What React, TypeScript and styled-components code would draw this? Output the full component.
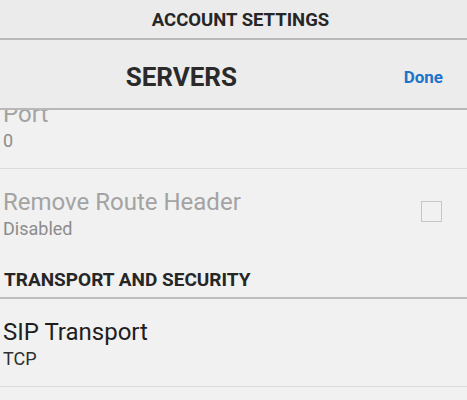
import React from "react";
import styled, { createGlobalStyle } from "styled-components";

const Global = createGlobalStyle`
  html, body { margin: 0; padding: 0; background: #f0f0f0; }
  body { font-family: Roboto, "Noto Sans", "Liberation Sans", sans-serif; }
  * { box-sizing: border-box; }
`;

const Screen = styled.div`
  width: 467px;
  height: 400px;
  display: flex;
  flex-direction: column;
  overflow: hidden;
  background: #f1f1f1;
`;

const TopBar = styled.div`
  height: 40px;
  flex-shrink: 0;
  display: flex;
  align-items: center;
  justify-content: center;
  padding: 1px 0 0 14px;
  background: #ebebeb;
  border-bottom: 2px solid #b8b8b8;
  font-size: 18.5px;
  font-weight: 700;
  color: #262626;
`;

const NavBar = styled.div`
  height: 70px;
  flex-shrink: 0;
  display: flex;
  align-items: center;
  padding-top: 6px;
  background: #ececec;
  border-bottom: 2px solid #b8b8b8;
`;

const NavTitle = styled.div`
  flex: 1;
  text-align: center;
  font-size: 26px;
  font-weight: 700;
  color: #2a2a2a;
`;

const DoneButton = styled.button`
  border: 0;
  background: none;
  padding: 0 24px 0 41px;
  font-family: inherit;
  font-size: 17px;
  font-weight: 700;
  color: #1c74c9;
  cursor: pointer;
`;

const Viewport = styled.div`
  flex: 1;
  overflow: hidden;
`;

const List = styled.div`
  display: flex;
  flex-direction: column;
  margin-top: -29px;
`;

const Row = styled.div<{ $divider?: boolean }>`
  height: 88px;
  display: flex;
  align-items: center;
  padding: 0 25px 0 3px;
  border-bottom: ${(p) => (p.$divider ? "1px solid #dcdcdc" : "none")};
`;

const RowText = styled.div`
  flex: 1;
  display: flex;
  flex-direction: column;
  padding-top: 2px;
`;

const Title = styled.div<{ $disabled?: boolean }>`
  font-size: 24px;
  line-height: 28px;
  color: ${(p) => (p.$disabled ? "#a3a3a3" : "#1e1e1e")};
`;

const Subtitle = styled.div<{ $disabled?: boolean }>`
  font-size: 18px;
  line-height: 22px;
  margin-top: 2px;
  color: ${(p) => (p.$disabled ? "#8c8c8c" : "#2e2e2e")};
`;

const Checkbox = styled.div`
  width: 21px;
  height: 21px;
  border: 1.5px solid #c6c6c6;
  margin-top: -3px;
`;

const SectionHeader = styled.div`
  height: 42px;
  display: flex;
  align-items: center;
  padding: 4px 4px 0;
  border-bottom: 2px solid #bdbdbd;
  font-size: 19px;
  font-weight: 700;
  color: #262626;
`;

export default function App() {
  return (
    <>
      <Global />
      <Screen>
        <TopBar>ACCOUNT SETTINGS</TopBar>
        <NavBar>
          <NavTitle>SERVERS</NavTitle>
          <DoneButton>Done</DoneButton>
        </NavBar>
        <Viewport>
          <List>
            <Row $divider>
              <RowText>
                <Title $disabled>Port</Title>
                <Subtitle $disabled>0</Subtitle>
              </RowText>
            </Row>
            <Row>
              <RowText>
                <Title $disabled>Remove Route Header</Title>
                <Subtitle $disabled>Disabled</Subtitle>
              </RowText>
              <Checkbox />
            </Row>
            <SectionHeader>TRANSPORT AND SECURITY</SectionHeader>
            <Row $divider>
              <RowText>
                <Title>SIP Transport</Title>
                <Subtitle>TCP</Subtitle>
              </RowText>
            </Row>
          </List>
        </Viewport>
      </Screen>
    </>
  );
}
